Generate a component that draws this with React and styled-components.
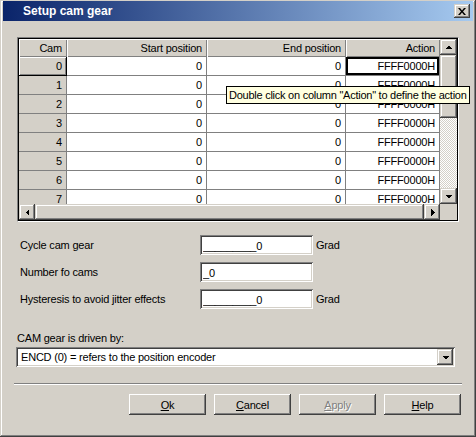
import React from 'react'
import styled, { createGlobalStyle, css } from 'styled-components'

// --- palette (classic windows) ---
const C = {
  face: '#d4d0c8',
  light: '#ffffff',
  shadow: '#808080',
  dark: '#404040',
  black: '#000000',
  info: '#ffffe1',
}

const FONT = `"Liberation Sans", Arial, sans-serif`

const raisedBtn = css`
  background: ${C.face};
  box-shadow: inset -1px -1px ${C.dark}, inset 1px 1px ${C.light},
    inset -2px -2px ${C.shadow}, inset 2px 2px ${C.face};
`

const raisedScroll = css`
  background: ${C.face};
  box-shadow: inset -1px -1px ${C.dark}, inset 1px 1px ${C.face},
    inset -2px -2px ${C.shadow}, inset 2px 2px ${C.light};
`

const sunken = css`
  background: ${C.light};
  box-shadow: inset 1px 1px ${C.shadow}, inset -1px -1px ${C.light},
    inset 2px 2px ${C.dark}, inset -2px -2px ${C.face};
`

const GlobalStyle = createGlobalStyle`
  body {
    margin: 0;
    background: ${C.face};
  }
`

const rows = [0, 1, 2, 3, 4, 5, 6, 7]

const fields = [
  { label: 'Cycle cam gear', value: '_________0', unit: 'Grad' },
  { label: 'Number fo cams', value: '_0' },
  { label: 'Hysteresis to avoid jitter effects', value: '_________0', unit: 'Grad' },
]

const Arrow = ({ dir = 'up' }) => {
  const rot = { up: 0, right: 90, down: 180, left: 270 }[dir]
  return (
    <svg width="7" height="7" viewBox="0 0 7 7" style={{ transform: `rotate(${rot}deg)` }}>
      <polygon points="3.5,1.5 7,5 0,5" fill={C.black} shapeRendering="crispEdges" />
    </svg>
  )
}

const App = () => {
  return (
    <>
      <GlobalStyle />
      <Window>
        <TitleBar>
          <TitleText>Setup cam gear</TitleText>
          <CloseBtn>
            <svg width="8" height="7" viewBox="0 0 8 7">
              <path d="M0 0h2l2 2.5L6 0h2L5 3.5 8 7H6L4 4.5 2 7H0l3-3.5z" fill={C.black} />
            </svg>
          </CloseBtn>
        </TitleBar>

        <Body>
          <GridFrame>
            <GridInner>
              <Table>
                <Row>
                  <HeadCell>Cam</HeadCell>
                  <HeadCell>Start position</HeadCell>
                  <HeadCell>End position</HeadCell>
                  <HeadCell>Action</HeadCell>
                </Row>
                {rows.map((n) => (
                  <Row key={n}>
                    <RowHead $active={n === 0}>{n}</RowHead>
                    <Cell>0</Cell>
                    <Cell>0</Cell>
                    <Cell $focus={n === 0}>FFFF0000H</Cell>
                  </Row>
                ))}
              </Table>

              <VScroll>
                <ScrollBtn $size="16px"><Arrow dir="up" /></ScrollBtn>
                <Thumb $size="63px" />
                <Track />
                <ScrollBtn $size="16px"><Arrow dir="down" /></ScrollBtn>
              </VScroll>

              <HScroll>
                <ScrollBtn $size="16px"><Arrow dir="left" /></ScrollBtn>
                <Thumb $grow />
                <ScrollBtn $size="16px"><Arrow dir="right" /></ScrollBtn>
              </HScroll>
              <Corner />
            </GridInner>
          </GridFrame>

          <Form>
            {fields.map((f) => (
              <React.Fragment key={f.label}>
                <FieldLabel>{f.label}</FieldLabel>
                <FieldInput readOnly value={f.value} />
                <Unit>{f.unit || ''}</Unit>
              </React.Fragment>
            ))}
          </Form>

          <DriveLabel>CAM gear is driven by:</DriveLabel>
          <Combo>
            <ComboText>ENCD (0) = refers to the position encoder</ComboText>
            <ComboBtn><Arrow dir="down" /></ComboBtn>
          </Combo>

          <Separator />

          <Buttons>
            <PushBtn><u>O</u>k</PushBtn>
            <PushBtn><u>C</u>ancel</PushBtn>
            <PushBtn $disabled><u>A</u>pply</PushBtn>
            <PushBtn><u>H</u>elp</PushBtn>
          </Buttons>

          <Tooltip>Double click on column "Action" to define the action</Tooltip>
        </Body>
      </Window>
    </>
  )
}

const Window = styled.div`
  position: relative;
  box-sizing: border-box;
  width: 476px;
  height: 437px;
  padding: 1px 3px 3px 3px;
  display: flex;
  flex-direction: column;
  overflow: hidden;
  background: ${C.face};
  box-shadow: inset -1px -1px ${C.dark}, inset 1px 1px ${C.face},
    inset -2px -2px ${C.shadow}, inset 2px 2px ${C.light};
  font-family: ${FONT};
  font-size: 11px;
  letter-spacing: -0.2px;
  color: ${C.black};
`

const TitleBar = styled.div`
  height: 20px;
  flex-shrink: 0;
  display: flex;
  align-items: center;
  padding: 0 3px 0 20px;
  background: linear-gradient(to right, #0a246a, #a6caf0);
`

const TitleText = styled.span`
  color: ${C.light};
  font-weight: bold;
  font-size: 12px;
  letter-spacing: 0;
`

const CloseBtn = styled.div`
  ${raisedScroll}
  margin-left: auto;
  width: 16px;
  height: 14px;
  display: flex;
  align-items: center;
  justify-content: center;
`

const Body = styled.div`
  flex: 1;
  display: flex;
  flex-direction: column;
  padding: 16px 14px 0 14px;
`

const GridFrame = styled.div`
  box-sizing: border-box;
  width: 442px;
  height: 185px;
  border: 1px solid;
  border-color: ${C.shadow} ${C.light} ${C.light} ${C.shadow};
`

const GridInner = styled.div`
  border: 1px solid ${C.black};
  display: grid;
  grid-template-columns: 421px 17px;
  grid-template-rows: 165px 16px;
  background: ${C.face};
`

const Table = styled.div`
  overflow: hidden;
  display: flex;
  flex-direction: column;
`

const Row = styled.div`
  display: grid;
  grid-template-columns: 48px 140px 139px 94px;
  flex-shrink: 0;
`

const HeadCell = styled.div`
  box-sizing: border-box;
  height: 18px;
  line-height: 18px;
  padding-right: 5px;
  text-align: right;
  background: ${C.face};
  box-shadow: inset 1px 1px ${C.light}, inset -1px -1px ${C.shadow};
`

const RowHead = styled.div`
  box-sizing: border-box;
  height: 19px;
  line-height: 18px;
  padding-right: 4px;
  text-align: right;
  background: ${C.face};
  border-right: 1px solid ${C.shadow};
  border-bottom: 1px solid ${C.shadow};
  ${(p) =>
    p.$active &&
    css`
      border-color: ${C.black};
      box-shadow: inset 1px 1px ${C.light}, inset -1px -1px ${C.shadow};
    `}
`

const Cell = styled.div`
  box-sizing: border-box;
  height: 19px;
  line-height: 18px;
  padding-right: 4px;
  text-align: right;
  background: ${C.light};
  border-right: 1px solid ${C.shadow};
  border-bottom: 1px solid ${C.shadow};
  ${(p) =>
    p.$focus &&
    css`
      box-shadow: inset 0 0 0 2px ${C.black};
    `}
`

const VScroll = styled.div`
  display: flex;
  flex-direction: column;
`

const HScroll = styled.div`
  display: flex;
`

const ScrollBtn = styled.div`
  ${raisedScroll}
  flex: 0 0 ${(p) => p.$size};
  display: flex;
  align-items: center;
  justify-content: center;
`

const Thumb = styled.div`
  ${raisedScroll}
  flex: ${(p) => (p.$grow ? '1 1 auto' : `0 0 ${p.$size}`)};
`

const Track = styled.div`
  flex: 1;
  background: repeating-conic-gradient(${C.light} 0 25%, ${C.face} 0 50%) 0 0 / 2px 2px;
`

const Corner = styled.div`
  background: ${C.face};
`

const Form = styled.div`
  margin-top: 13px;
  display: grid;
  grid-template-columns: 183px 113px auto;
  grid-auto-rows: 20px;
  row-gap: 7px;
  align-items: center;
`

const FieldLabel = styled.span`
  padding-left: 3px;
`

const FieldInput = styled.input`
  ${sunken}
  box-sizing: border-box;
  width: 113px;
  height: 20px;
  margin: 0;
  border: none;
  outline: none;
  padding: 1px 2px 0 3px;
  font-family: ${FONT};
  font-size: 11px;
  letter-spacing: -0.2px;
  color: ${C.black};
`

const Unit = styled.span`
  padding-left: 3px;
`

const DriveLabel = styled.div`
  margin-top: 23px;
  line-height: 13px;
`

const Combo = styled.div`
  ${sunken}
  box-sizing: border-box;
  margin: 2px 0 0 -1px;
  width: 439px;
  height: 20px;
  padding: 2px;
  display: flex;
  align-items: center;
`

const ComboText = styled.span`
  flex: 1;
  padding-left: 3px;
`

const ComboBtn = styled.div`
  ${raisedScroll}
  width: 16px;
  height: 16px;
  display: flex;
  align-items: center;
  justify-content: center;
`

const Separator = styled.div`
  margin: 16px 0 0 -3px;
  width: 448px;
  border-top: 1px solid ${C.shadow};
  border-bottom: 1px solid ${C.light};
`

const Buttons = styled.div`
  margin: 9px -2px 0 0;
  display: flex;
  justify-content: flex-end;
  gap: 8px;
`

const PushBtn = styled.div`
  ${raisedBtn}
  width: 77px;
  height: 21px;
  display: flex;
  align-items: center;
  justify-content: center;
  color: ${(p) => (p.$disabled ? C.shadow : C.black)};
  text-shadow: ${(p) => (p.$disabled ? `1px 1px ${C.light}` : 'none')};
`

const Tooltip = styled.div`
  position: absolute;
  left: 226px;
  top: 86px;
  box-sizing: border-box;
  height: 18px;
  line-height: 16px;
  padding: 0 2px;
  border: 1px solid ${C.black};
  background: ${C.info};
  white-space: nowrap;
  letter-spacing: -0.25px;
`

export default App
